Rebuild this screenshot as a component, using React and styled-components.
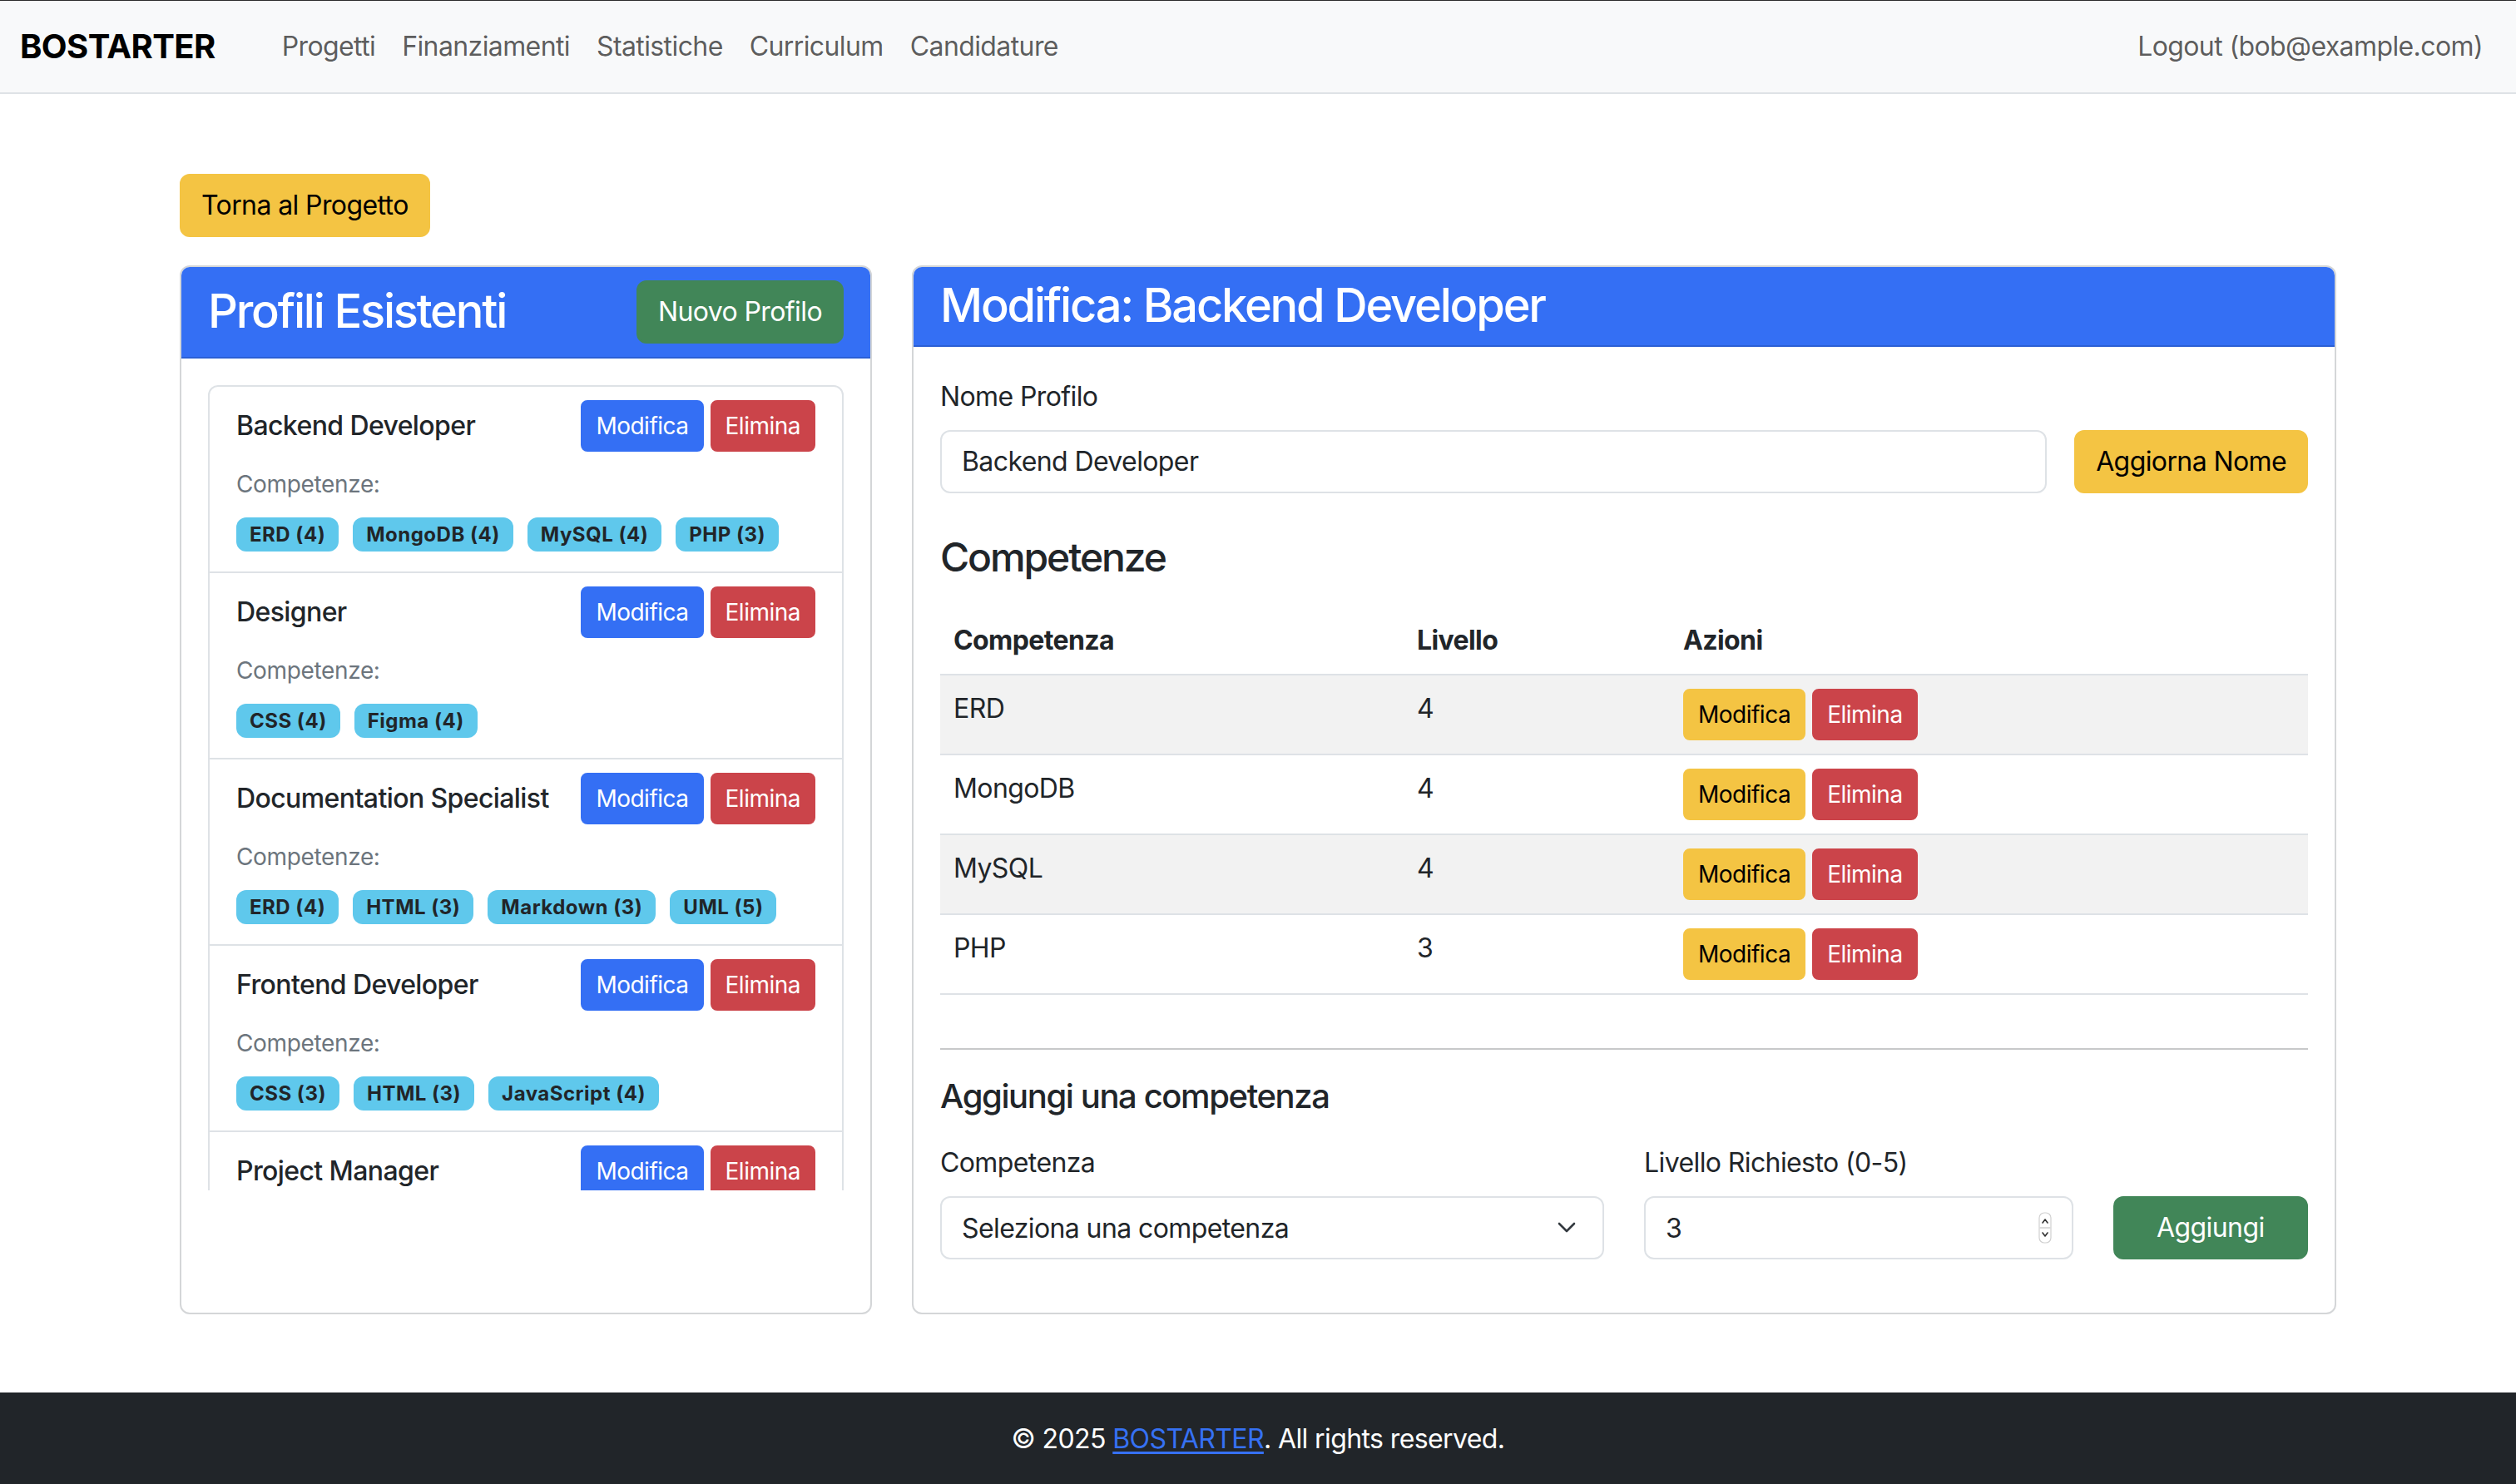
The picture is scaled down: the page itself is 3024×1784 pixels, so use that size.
import React from "react";
import styled, { createGlobalStyle } from "styled-components";

const C = {
  blue: "#346ff4",
  red: "#cb444a",
  green: "#418658",
  yellow: "#f4c443",
  info: "#5fc8ec",
  text: "#212529",
  muted: "#6c757d",
  border: "#dee2e6",
};

const GlobalStyle = createGlobalStyle`
  * { box-sizing: border-box; }
  html, body { margin: 0; padding: 0; }
  body {
    font-family: Inter, "Noto Sans", "Liberation Sans", sans-serif;
    font-size: 32px;
    line-height: 1.5;
    letter-spacing: -0.6px;
    color: ${C.text};
    background: #fff;
  }
  input, select, button { letter-spacing: inherit; }
`;

const Page = styled.div`
  display: flex;
  flex-direction: column;
  min-height: 100vh;
`;

const NavBar = styled.nav`
  display: flex;
  align-items: center;
  height: 113px;
  padding: 0 24px;
  background: #f8f9fa;
  border-top: 1px solid #2b2b2b;
  border-bottom: 2px solid ${C.border};
`;

const Brand = styled.a`
  font-size: 40px;
  font-weight: 700;
  color: #000;
  text-decoration: none;
  margin-right: 64px;
  letter-spacing: -0.6px;
`;

const NavLink = styled.a`
  padding: 0 16px;
  color: rgba(0, 0, 0, 0.65);
  text-decoration: none;
  font-size: 32px;
  margin-left: ${(p) => (p.$end ? "auto" : "0")};
`;

const Main = styled.main`
  flex: 1;
  width: 2592px;
  margin: 0 auto;
  padding: 96px 0 94px;
`;

const Btn = styled.button`
  font-family: inherit;
  font-size: ${(p) => (p.$sm ? "28px" : "32px")};
  letter-spacing: ${(p) => (p.$sm ? "-0.5px" : "-0.6px")};
  line-height: 1.5;
  padding: ${(p) => (p.$sm ? "8px 16px" : "12px 24px")};
  border-radius: ${(p) => (p.$sm ? "8px" : "12px")};
  border: 2px solid ${(p) => p.$bg};
  background: ${(p) => p.$bg};
  color: ${(p) => p.$fg || "#fff"};
  width: ${(p) => (p.$block ? "100%" : "auto")};
  cursor: pointer;
  white-space: nowrap;
`;

const BackRow = styled.div`
  margin-bottom: 34px;
`;

const Columns = styled.div`
  display: grid;
  grid-template-columns: 832fr 1712fr;
  gap: 48px;
  align-items: stretch;
`;

const Card = styled.section`
  border: 2px solid #d4d6d8;
  border-radius: 12px;
  background: #fff;
  overflow: hidden;
  display: flex;
  flex-direction: column;
`;

const CardHeader = styled.header`
  display: flex;
  align-items: center;
  justify-content: space-between;
  padding: 16px 32px;
  background: ${C.blue};
  color: #fff;
  border-bottom: 2px solid #2b5fd4;
`;

const CardTitle = styled.h3`
  margin: 0;
  font-size: 56px;
  font-weight: 500;
  line-height: 1.1;
  letter-spacing: -2.2px;
`;

const ScrollBody = styled.div`
  padding: 32px;
  max-height: 1000px;
  overflow-y: auto;
  scrollbar-width: none;
  &::-webkit-scrollbar { display: none; }
`;

const CardBody = styled.div`
  padding: 36px 32px 32px;
`;

const List = styled.ul`
  list-style: none;
  margin: 0;
  padding: 0;
  border: 2px solid ${C.border};
  border-radius: 12px;
`;

const Item = styled.li`
  padding: 16px 32px 24px;
  & + & { border-top: 2px solid ${C.border}; }
`;

const ItemHead = styled.div`
  display: flex;
  align-items: center;
  justify-content: space-between;
`;

const ItemName = styled.span`
  font-size: 32px;
  font-weight: 500;
`;

const BtnGroup = styled.div`
  display: flex;
  gap: 8px;
`;

const SkillLabel = styled.div`
  margin-top: 18px;
  font-size: 28px;
  line-height: 42px;
  letter-spacing: -0.35px;
  color: ${C.muted};
`;

const Badges = styled.div`
  margin-top: 19px;
  display: flex;
  flex-wrap: wrap;
  gap: 17px;
`;

const Badge = styled.span`
  background: ${C.info};
  color: ${C.text};
  font-size: 24px;
  font-weight: 700;
  line-height: 1;
  letter-spacing: 0.5px;
  padding: 8.5px 16px;
  border-radius: 12px;
`;

const FieldLabel = styled.label`
  display: block;
  font-size: 32px;
  line-height: 48px;
  margin-bottom: 16px;
`;

const InlineRow = styled.div`
  display: flex;
  gap: 33px;
`;

const TextInput = styled.input`
  flex: 1;
  width: 100%;
  height: 76px;
  font-family: inherit;
  font-size: 32px;
  color: ${C.text};
  padding: 12px 24px;
  border: 2px solid ${C.border};
  border-radius: 12px;
  background: #fff;
  outline: none;
`;

const SectionTitle = styled.h4`
  margin: 48px 0 32px;
  font-size: 48px;
  font-weight: 500;
  line-height: 1.2;
  letter-spacing: -2.1px;
`;

const Table = styled.table`
  width: 100%;
  border-collapse: collapse;
  margin: 0;
`;

const Th = styled.th`
  text-align: left;
  font-weight: 700;
  padding: 16px;
  line-height: 48px;
  border-bottom: 2px solid ${C.border};
  width: ${(p) => p.$w || "auto"};
`;

const Tr = styled.tr`
  background: ${(p) => (p.$striped ? "#f2f2f2" : "#fff")};
`;

const Td = styled.td`
  padding: 16px;
  line-height: 48px;
  vertical-align: top;
  border-bottom: 2px solid ${C.border};
`;

const Rule = styled.hr`
  margin: 64px 0 32px;
  border: 0;
  border-top: 2px solid #c8c9ca;
`;

const SubTitle = styled.h5`
  margin: 0 0 32px;
  font-size: 40px;
  font-weight: 500;
  line-height: 1.2;
  letter-spacing: -1.4px;
`;

const FormGrid = styled.div`
  display: grid;
  grid-template-columns: 797fr 515fr 234fr;
  gap: 48px;
  align-items: end;
  margin-bottom: 32px;
`;

const Control = styled.div`
  position: relative;
`;

const Select = styled.select`
  appearance: none;
  -webkit-appearance: none;
  width: 100%;
  height: 76px;
  font-family: inherit;
  font-size: 32px;
  color: ${C.text};
  padding: 12px 72px 12px 24px;
  border: 2px solid ${C.border};
  border-radius: 12px;
  background: #fff;
  outline: none;
`;

const Overlay = styled.svg`
  position: absolute;
  top: 50%;
  right: ${(p) => p.$right}px;
  transform: translateY(-50%);
  pointer-events: none;
`;

const Footer = styled.footer`
  background: #212529;
  color: #fff;
  text-align: center;
  height: 112px;
  line-height: 112px;
  font-size: 32px;
`;

const FooterLink = styled.a`
  color: #3671f3;
  text-decoration: underline;
  text-underline-offset: 4px;
`;

const profiles = [
  { name: "Backend Developer", skills: ["ERD (4)", "MongoDB (4)", "MySQL (4)", "PHP (3)"] },
  { name: "Designer", skills: ["CSS (4)", "Figma (4)"] },
  { name: "Documentation Specialist", skills: ["ERD (4)", "HTML (3)", "Markdown (3)", "UML (5)"] },
  { name: "Frontend Developer", skills: ["CSS (3)", "HTML (3)", "JavaScript (4)"] },
  { name: "Project Manager", skills: ["Agile (4)", "Scrum (4)"] },
];

const rows = [
  ["ERD", 4],
  ["MongoDB", 4],
  ["MySQL", 4],
  ["PHP", 3],
];

export default function App() {
  return (
    <Page>
      <GlobalStyle />
      <NavBar>
        <Brand href="#">BOSTARTER</Brand>
        <NavLink href="#">Progetti</NavLink>
        <NavLink href="#">Finanziamenti</NavLink>
        <NavLink href="#">Statistiche</NavLink>
        <NavLink href="#">Curriculum</NavLink>
        <NavLink href="#">Candidature</NavLink>
        <NavLink href="#" $end>Logout (bob@example.com)</NavLink>
      </NavBar>

      <Main>
        <BackRow>
          <Btn $bg={C.yellow} $fg="#000">Torna al Progetto</Btn>
        </BackRow>
        <Columns>
          <Card>
            <CardHeader>
              <CardTitle>Profili Esistenti</CardTitle>
              <Btn $bg={C.green}>Nuovo Profilo</Btn>
            </CardHeader>
            <ScrollBody>
              <List>
                {profiles.map((p) => (
                  <Item key={p.name}>
                    <ItemHead>
                      <ItemName>{p.name}</ItemName>
                      <BtnGroup>
                        <Btn $sm $bg={C.blue}>Modifica</Btn>
                        <Btn $sm $bg={C.red}>Elimina</Btn>
                      </BtnGroup>
                    </ItemHead>
                    <SkillLabel>Competenze:</SkillLabel>
                    <Badges>
                      {p.skills.map((s) => (
                        <Badge key={s}>{s}</Badge>
                      ))}
                    </Badges>
                  </Item>
                ))}
              </List>
            </ScrollBody>
          </Card>

          <Card>
            <CardHeader>
              <CardTitle>Modifica: Backend Developer</CardTitle>
            </CardHeader>
            <CardBody>
              <FieldLabel>Nome Profilo</FieldLabel>
              <InlineRow>
                <TextInput defaultValue="Backend Developer" />
                <Btn $bg={C.yellow} $fg="#000">Aggiorna Nome</Btn>
              </InlineRow>

              <SectionTitle>Competenze</SectionTitle>
              <Table>
                <thead>
                  <tr>
                    <Th $w="557px">Competenza</Th>
                    <Th $w="320px">Livello</Th>
                    <Th>Azioni</Th>
                  </tr>
                </thead>
                <tbody>
                  {rows.map(([n, l], i) => (
                    <Tr key={n} $striped={i % 2 === 0}>
                      <Td>{n}</Td>
                      <Td>{l}</Td>
                      <Td>
                        <BtnGroup>
                          <Btn $sm $bg={C.yellow} $fg="#000">Modifica</Btn>
                          <Btn $sm $bg={C.red}>Elimina</Btn>
                        </BtnGroup>
                      </Td>
                    </Tr>
                  ))}
                </tbody>
              </Table>

              <Rule />
              <SubTitle>Aggiungi una competenza</SubTitle>
              <FormGrid>
                <div>
                  <FieldLabel>Competenza</FieldLabel>
                  <Control>
                    <Select defaultValue="">
                      <option value="">Seleziona una competenza</option>
                    </Select>
                    <Overlay $right={34} width="22" height="14" viewBox="0 0 22 14">
                      <path d="M2 2 L11 11 L20 2" fill="none" stroke="#343a40" strokeWidth="2.6" strokeLinecap="round" strokeLinejoin="round" />
                    </Overlay>
                  </Control>
                </div>
                <div>
                  <FieldLabel>Livello Richiesto (0-5)</FieldLabel>
                  <Control>
                    <TextInput defaultValue="3" />
                    <Overlay $right={26} width="16" height="38" viewBox="0 0 16 38">
                      <rect x="1" y="1" width="14" height="36" rx="6" fill="#fff" stroke="#d0d0d0" strokeWidth="1.2" />
                      <line x1="1.5" y1="19" x2="14.5" y2="19" stroke="#d0d0d0" strokeWidth="1.5" />
                      <path d="M5 13 L8 9 L11 13" fill="none" stroke="#333" strokeWidth="1.6" strokeLinecap="round" strokeLinejoin="round" />
                      <path d="M5 25 L8 29 L11 25" fill="none" stroke="#333" strokeWidth="1.6" strokeLinecap="round" strokeLinejoin="round" />
                    </Overlay>
                  </Control>
                </div>
                <Btn $block $bg={C.green}>Aggiungi</Btn>
              </FormGrid>
            </CardBody>
          </Card>
        </Columns>
      </Main>

      <Footer>
        © 2025 <FooterLink href="#">BOSTARTER</FooterLink>. All rights reserved.
      </Footer>
    </Page>
  );
}
